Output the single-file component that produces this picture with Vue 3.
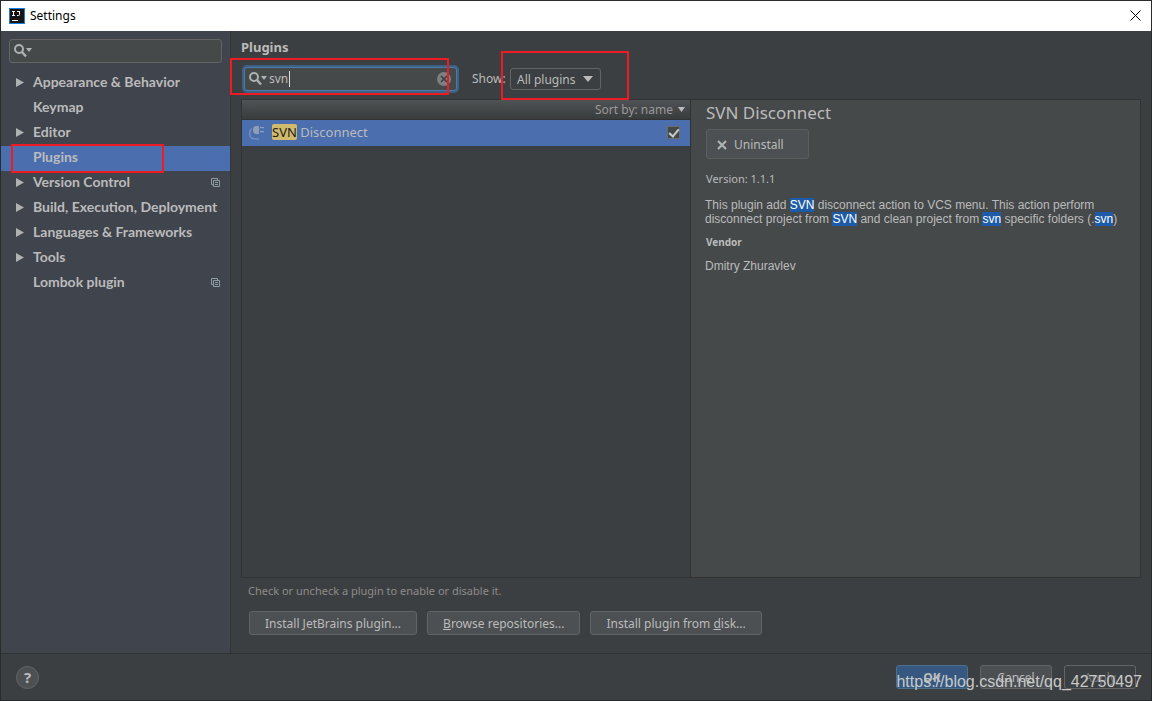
<script setup>
import { ref } from 'vue'

const sections = [
  { label: 'Appearance & Behavior', expandable: true },
  { label: 'Keymap' },
  { label: 'Editor', expandable: true },
  { label: 'Plugins', marked: true },
  { label: 'Version Control', expandable: true, project: true },
  { label: 'Build, Execution, Deployment', expandable: true },
  { label: 'Languages & Frameworks', expandable: true },
  { label: 'Tools', expandable: true },
  { label: 'Lombok plugin', project: true },
]
const current = ref('Plugins')
const settingsQuery = ref('')
const query = ref('svn')
const show = ref('All plugins')
const enabled = ref(true)
</script>

<template>
  <div class="window">
    <header class="titlebar">
      <svg class="logo" width="16" height="16" viewBox="0 0 16 16" aria-hidden="true">
        <rect width="16" height="16" fill="#1a7fe0" />
        <rect x="1" y="1" width="14" height="14" fill="#151515" />
        <path d="M3 3.500h3M4.500 3.500v4M3 7.500h3M8 3.500h3M10.500 3.500v3q0 1-1 1H8M3 12.500h6" fill="none" stroke="#fff" />
      </svg>
      <h1>Settings</h1>
      <button class="close" type="button" aria-label="Close">
        <svg width="11" height="11" viewBox="0 0 11 11"><path d="M.5.5l10 10M10.500.5l-10 10" stroke="#000" /></svg>
      </button>
    </header>

    <div class="body">
      <aside class="sidebar">
        <div class="side-search">
          <svg class="lens" width="18" height="14" viewBox="0 0 18 14" aria-hidden="true">
            <circle cx="5" cy="5" r="4" fill="none" stroke="#afb1b3" stroke-width="2" />
            <path d="M8 8l4 4.500" stroke="#afb1b3" stroke-width="2.400" />
            <path d="M12 4h6l-3 4z" fill="#afb1b3" />
          </svg>
          <input v-model="settingsQuery" type="text" aria-label="Search settings" />
        </div>
        <nav>
          <button
            v-for="s in sections"
            :key="s.label"
            type="button"
            class="section"
            :class="{ selected: current === s.label }"
            @click="current = s.label"
          >
            <span class="arrow"><svg v-if="s.expandable" width="8" height="9" viewBox="0 0 8 9"><path d="M0 0l8 4.500L0 9z" fill="#afb1b3" /></svg></span>
            <span class="name">{{ s.label }}</span>
            <svg v-if="s.project" width="9" height="9" viewBox="0 0 9 9" fill="none" stroke="#8f9ba3">
              <path d="M2.500 6.500h-2v-6h6v2M2.500 2.500h6v6h-6zM4 4.500h3M4 6.500h3" />
            </svg>
            <i v-if="s.marked" class="mark mark-section"></i>
          </button>
        </nav>
      </aside>

      <main class="content">
        <h2>Plugins</h2>
        <div class="filters">
          <div class="plugin-search">
            <svg class="lens" width="18" height="14" viewBox="0 0 18 14" aria-hidden="true">
              <circle cx="5" cy="5" r="4" fill="none" stroke="#afb1b3" stroke-width="2" />
              <path d="M8 8l4 4.500" stroke="#afb1b3" stroke-width="2.400" />
              <path d="M12 4h6l-3 4z" fill="#afb1b3" />
            </svg>
            <div class="entry">
              <input v-model="query" type="text" aria-label="Search plugins" />
              <i class="caret"></i>
            </div>
            <button class="clear" type="button" aria-label="Clear" @click="query = ''">
              <svg width="14" height="14" viewBox="0 0 14 14"><circle cx="7" cy="7" r="7" fill="#7d7f80" /><path d="M4 4l6 6M10 4l-6 6" stroke="#3c3f41" stroke-width="1.600" /></svg>
            </button>
            <i class="mark mark-search"></i>
          </div>
          <label class="show-label" for="show">Show:</label>
          <div class="dropdown">
            <select id="show" v-model="show">
              <option>All plugins</option>
              <option>Enabled</option>
              <option>Disabled</option>
            </select>
            <svg class="chevron" width="10" height="6" viewBox="0 0 10 6" aria-hidden="true"><path d="M0 0h10L5 6z" fill="#bbb" /></svg>
            <i class="mark mark-show"></i>
          </div>
        </div>

        <div class="panes">
          <section class="list">
            <div class="list-head">
              <button type="button">Sort by: name
                <svg width="7" height="5" viewBox="0 0 7 5"><path d="M0 0h7L3.500 5z" fill="#bbb" /></svg>
              </button>
            </div>
            <label class="plugin">
              <svg width="15" height="15" viewBox="0 0 15 15" aria-hidden="true">
                <path d="M2.500 3.500Q.7 5 .7 8.500.7 14 6 14h4" fill="none" stroke="#8098bd" stroke-width="1.200" />
                <path d="M10 1v8H7Q4 9 4 5t3-4zM11 2h4v1.200h-4zM11 6h4v1.200h-4z" fill="#8e9fb5" />
              </svg>
              <span class="plugin-name"><mark>SVN</mark> Disconnect</span>
              <input v-model="enabled" type="checkbox" />
            </label>
          </section>
          <section class="details">
            <h3>SVN Disconnect</h3>
            <button class="uninstall" type="button">
              <svg width="10" height="10" viewBox="0 0 10 10"><path d="M1 1l8 8M9 1L1 9" stroke="#afb1b3" stroke-width="2.200" /></svg>
              Uninstall
            </button>
            <p class="version">Version: 1.1.1</p>
            <p class="about">This plugin add <mark>SVN</mark> disconnect action to VCS menu. This action perform disconnect project from <mark>SVN</mark> and clean project from <mark>svn</mark> specific folders (.<mark>svn</mark>)</p>
            <h4>Vendor</h4>
            <p class="vendor">Dmitry Zhuravlev</p>
          </section>
        </div>

        <p class="hint">Check or uncheck a plugin to enable or disable it.</p>
        <div class="actions">
          <button class="btn" type="button">Install <u>J</u>etBrains plugin...</button>
          <button class="btn" type="button"><u>B</u>rowse repositories...</button>
          <button class="btn" type="button">Install plugin from <u>d</u>isk...</button>
        </div>
      </main>
    </div>

    <footer class="footer">
      <button class="help" type="button" aria-label="Help">?</button>
      <div class="confirm">
        <button class="btn primary" type="button">OK</button>
        <button class="btn" type="button">Cancel</button>
        <button class="btn" type="button" disabled>Apply</button>
      </div>
      <span class="watermark">https://blog.csdn.net/qq_42750497</span>
    </footer>
  </div>
</template>

<style>
body { margin: 0; background: #3c3f41; }
</style>

<style scoped>
* { box-sizing: border-box; }
h1, h2, h3, h4, p { margin: 0; }
button, input, select { font: inherit; color: inherit; border: 0; background: none; padding: 0; margin: 0; outline: none; }
svg { flex: none; }
.window {
  min-height: 100vh;
  display: flex;
  flex-direction: column;
  border: 1px solid #2b2b2b;
  background: #3c3f41;
  color: #bbb;
  font: 12px/18px "Noto Sans", "Open Sans", sans-serif;
}
.titlebar { height: 30px; display: flex; align-items: center; gap: 5px; padding: 0 10px 1px 8px; background: #fff; color: #000; }
.titlebar h1 { flex: 1; font-size: 12px; font-weight: 400; }
.close { display: flex; }

.body { flex: 1; display: flex; }
.sidebar { width: 230px; flex: none; padding-top: 8px; background: #40444d; border-right: 1px solid #323438; }
.side-search {
  display: flex; align-items: center; height: 24px; margin: 0 8px 8px; padding: 0 4px;
  background: #45494a; border: 1px solid #646464; border-radius: 3px;
}
.side-search input { flex: 1; min-width: 0; }
.section {
  position: relative; display: flex; align-items: center; width: 100%; height: 25px;
  padding: 0 10px 3px 15px; text-align: left;
  font-family: Lato, "Noto Sans", sans-serif; font-size: 14px; font-weight: 700;
}
.section.selected { background: #4b6eaf; }
.arrow { flex: none; width: 17px; display: flex; }
.name { flex: 1; white-space: nowrap; }

.mark { position: absolute; border: 2px solid #ed1c24; pointer-events: none; }
.mark-section { left: 10px; right: 66px; top: -2px; bottom: -2px; }
.mark-search { left: -15px; right: 7px; top: -10px; bottom: -5px; }
.mark-show { left: -9px; right: -28px; top: -17px; bottom: -10px; }

.content { flex: 1; min-width: 0; display: flex; flex-direction: column; padding: 7px 10px 18px; }
h2 { font-size: 13px; font-weight: 700; }
.filters { display: flex; align-items: center; margin: 9px 0 6px; }
.plugin-search {
  position: relative; display: flex; align-items: center; width: 213px; height: 24px;
  margin: 2px 15px 2px 3px; padding: 0 5px 0 4px;
  background: #45494a; border: 1px solid #4a7cab; border-radius: 3px; box-shadow: 0 0 0 2px #3d6185;
}
.entry { position: relative; flex: 1; display: flex; min-width: 0; margin-left: 2px; }
.entry input { width: 100%; }
.caret { position: absolute; left: 20px; top: 1px; bottom: 1px; width: 1px; background: #ddd; }
.clear { display: flex; }
.show-label { width: 34px; }
.dropdown { position: relative; margin-left: 4px; }
select {
  display: block; appearance: none; width: 91px; height: 22px; padding: 1px 6px 0;
  border: 1px solid #646464; border-radius: 3px;
}
.chevron { position: absolute; right: 8px; top: 8px; pointer-events: none; }

.panes { flex: 1; display: grid; grid-template-columns: minmax(0, 1fr) minmax(0, 1fr); border: 1px solid #323232; }
.list { border-right: 1px solid #323232; }
.list-head {
  display: flex; justify-content: flex-end; height: 20px; padding-right: 5px; color: #999;
  background: linear-gradient(#505355, #393c3d); border-bottom: 1px solid #323232;
}
.list-head button { display: flex; align-items: center; gap: 5px; }
.plugin { display: flex; align-items: center; height: 26px; padding: 0 10px 2px 7px; background: #4b6eaf; font-size: 13px; }
.plugin-name { flex: 1; margin-left: 8px; }
.plugin-name mark { background: #d0bb6c; color: #1c1c1c; border-radius: 2px; line-height: 16px; display: inline-block; }
.plugin input {
  appearance: none; width: 13px; height: 13px; border: 1px solid #6b6b6b; background: #43494a;
  display: grid; place-items: center;
}
.plugin input:checked::after { content: ""; width: 4px; height: 8px; border: solid #ccc; border-width: 0 2px 2px 0; transform: rotate(40deg); }
.details { padding: 2px 12px 0 15px; background: #45494a; }
h3 { font-size: 17px; line-height: 22px; font-weight: 400; }
.uninstall {
  display: flex; align-items: center; gap: 7px; width: 103px; height: 30px; margin-top: 5px; padding: 1px 0 0 10px;
  background: #4c5052; border: 1px solid #5a5d5e; border-radius: 3px;
}
.version { margin-top: 11px; font-size: 11px; }
.about, .vendor { font-family: "Liberation Sans", Arial, sans-serif; font-size: 12px; line-height: 14px; margin-left: -1px; }
.about { margin-top: 10px; }
.about mark { background: #1d5ba8; color: #fff; }
h4 { margin: 7px 0 8px; font-size: 10px; line-height: 18px; }

.hint { margin: 4px 7px 11px; font-size: 11px; color: #8c8c8c; }
.actions { display: flex; gap: 10px; padding-left: 8px; }
.btn { height: 24px; padding: 2px 15px 0; background: #4c5052; border: 1px solid #646464; border-radius: 3px; white-space: nowrap; }

.footer { position: relative; display: flex; align-items: center; justify-content: space-between; height: 47px; padding: 0 15px; border-top: 1px solid #323232; }
.help { width: 23px; height: 23px; border: 1px solid #646464; border-radius: 50%; background: #4c5052; font-size: 15px; font-weight: 700; line-height: 20px; }
.confirm { display: flex; gap: 12px; }
.confirm .btn { width: 72px; }
.confirm .primary { background: #365880; border-color: #4c708c; font-weight: 700; }
.confirm .btn:disabled { background: none; color: #777; }
.watermark { position: absolute; right: 9px; top: 18px; font: 16px/20px "Liberation Sans", Arial, sans-serif; color: #c8c9ca; pointer-events: none; }
</style>
